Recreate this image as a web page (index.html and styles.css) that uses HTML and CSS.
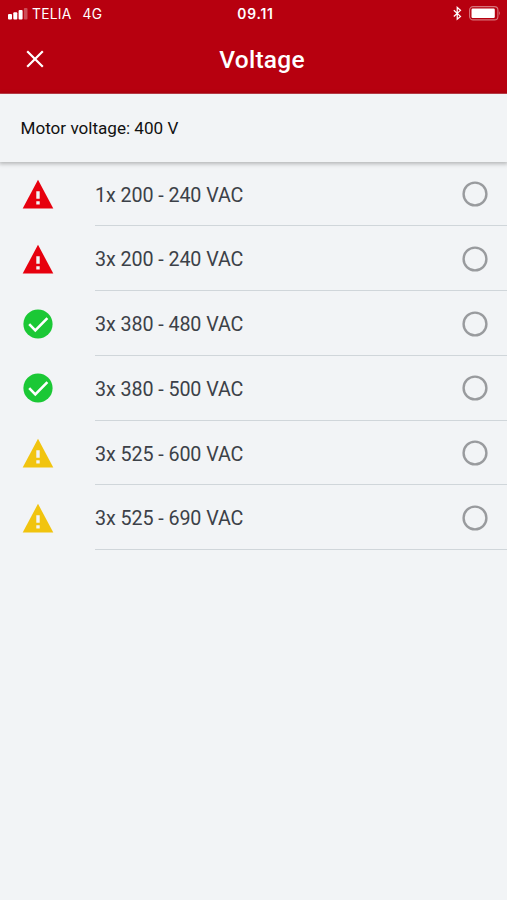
FILE: index.html
```html
<!DOCTYPE html>
<html lang="en">
<head>
<meta charset="utf-8">
<title>Voltage</title>
<link rel="stylesheet" href="styles.css">
</head>
<body>
<svg class="defs" aria-hidden="true">
  <symbol id="warning" viewBox="0 0 32 32"><path fill="currentColor" d="M16 1.800 31.300 30.400H.7z"/><path fill="#f2f4f6" d="M14.300 13.200h3.400v7.600h-3.400zM14.300 23.200h3.400v3.300h-3.400z"/></symbol>
  <symbol id="check" viewBox="0 0 32 32"><circle cx="16" cy="16" r="14.600" fill="currentColor"/><path d="m7.200 16.200 6.100 6.100L25.400 10.200" fill="none" stroke="#fff" stroke-width="2.600"/></symbol>
  <symbol id="radio" viewBox="0 0 26 26"><circle cx="13" cy="13" r="11.400" fill="none" stroke="#999b9e" stroke-width="2.400"/></symbol>
</svg>
<header class="header">
  <div class="status">
    <div class="carrier">
      <svg class="signal" width="20" height="12" viewBox="0 0 20 12" fill="#fff"><rect x="0" y="6" width="4" height="5.500" rx="1"/><rect x="5.300" y="4.200" width="4" height="7.300" rx="1"/><rect x="10.600" y="2" width="4" height="9.500" rx="1"/><rect x="15.900" y="0" width="3.600" height="11.500" rx="1" opacity=".3"/></svg>
      <span class="name">TELIA</span>
      <span>4G</span>
    </div>
    <span class="time">09.11</span>
    <div class="power">
      <svg width="9" height="15" viewBox="0 0 10 16" fill="none" stroke="#fff" stroke-width="1.400"><path d="m.9 4.400 7.400 6.800-3.600 3.100V1.300l3.600 3.200L.9 11.300"/></svg>
      <svg width="32" height="15" viewBox="0 0 32 15"><rect x=".6" y=".6" width="28.300" height="13.300" rx="3.500" fill="none" stroke="#fff" stroke-opacity=".45" stroke-width="1.100"/><rect x="2.500" y="2.500" width="23.300" height="9.500" rx="1.200" fill="#fff"/><path d="M30.200 5.100q1.700 2.200 0 4.400z" fill="#fff" opacity=".5"/></svg>
    </div>
  </div>
  <div class="bar">
    <svg class="close" width="18" height="18" viewBox="0 0 18 18"><path d="m1.200 1.200 15.600 15.600m0-15.600L1.200 16.800" stroke="#fff" stroke-width="2.200"/></svg>
    <h1 class="title">Voltage</h1>
  </div>
</header>
<div class="info">Motor voltage: 400 V</div>
<ul class="list">
  <li class="row"><svg class="icon red"><use href="#warning"/></svg><label class="option"><span>1x 200 - 240 VAC</span><svg class="radio"><use href="#radio"/></svg></label></li>
  <li class="row"><svg class="icon red"><use href="#warning"/></svg><label class="option"><span>3x 200 - 240 VAC</span><svg class="radio"><use href="#radio"/></svg></label></li>
  <li class="row"><svg class="icon green"><use href="#check"/></svg><label class="option"><span>3x 380 - 480 VAC</span><svg class="radio"><use href="#radio"/></svg></label></li>
  <li class="row"><svg class="icon green"><use href="#check"/></svg><label class="option"><span>3x 380 - 500 VAC</span><svg class="radio"><use href="#radio"/></svg></label></li>
  <li class="row"><svg class="icon yellow"><use href="#warning"/></svg><label class="option"><span>3x 525 - 600 VAC</span><svg class="radio"><use href="#radio"/></svg></label></li>
  <li class="row"><svg class="icon yellow"><use href="#warning"/></svg><label class="option"><span>3x 525 - 690 VAC</span><svg class="radio"><use href="#radio"/></svg></label></li>
</ul>
</body>
</html>
```
FILE: styles.css
```css
* { box-sizing: border-box; }
body {
  margin: 0;
  min-height: 900px;
  background: #f2f4f6;
  color: #3c4148;
  font-family: Roboto, "Liberation Sans", sans-serif;
}
svg { display: block; flex: none; }
.defs { display: none; }
.header { height: 94px; background: #b7000f; color: #fff; border-bottom: 1px solid #c9414c; }
.status {
  display: grid;
  grid-template-columns: 1fr auto 1fr;
  align-items: center;
  height: 28px;
  padding: 0 6px 0 10px;
  font-family: Inter, sans-serif;
  font-size: 13.8px;
}
.carrier { display: flex; align-items: center; margin-left: -2px; letter-spacing: .25px; }
.signal { margin-right: 4px; }
.name { margin-right: 11px; }
.time { font-weight: 600; font-size: 13.8px; letter-spacing: .8px; }
.power { display: flex; justify-content: flex-end; align-items: center; gap: 7px; padding-bottom: 2px; }
.bar {
  display: grid;
  grid-template-columns: 62px 1fr 45px;
  align-items: center;
  height: 62px;
}
.close { margin-left: 26px; }
.title { margin: 0; padding-top: 1px; text-align: center; font-size: 24.5px; line-height: 30px; font-weight: 500; letter-spacing: .25px; }
.info {
  height: 68px;
  padding-left: 20.5px;
  line-height: 68px;
  font-size: 17.1px;
  color: #111;
  box-shadow: 0 1px 4px 1px rgba(0, 0, 0, .25);
}
.list { margin: 0; padding: 0; list-style: none; }
.row { display: flex; align-items: center; height: 64.75px; padding-left: 22px; }
.row:first-child { height: 64.4px; }
.icon { width: 32px; height: 32px; }
.red { color: #e7000e; }
.green { color: #1bc835; }
.yellow { color: #f1c40f; }
.option {
  flex: 1;
  display: flex;
  align-items: center;
  justify-content: space-between;
  height: 100%;
  margin-left: 41px;
  padding-right: 19px;
  border-bottom: 1px solid #d0d6da;
  font-size: 19.7px;
  letter-spacing: -.08px;
}
.option span { padding-top: 3px; }
.radio { width: 26px; height: 26px; margin-top: 1px; }
```
